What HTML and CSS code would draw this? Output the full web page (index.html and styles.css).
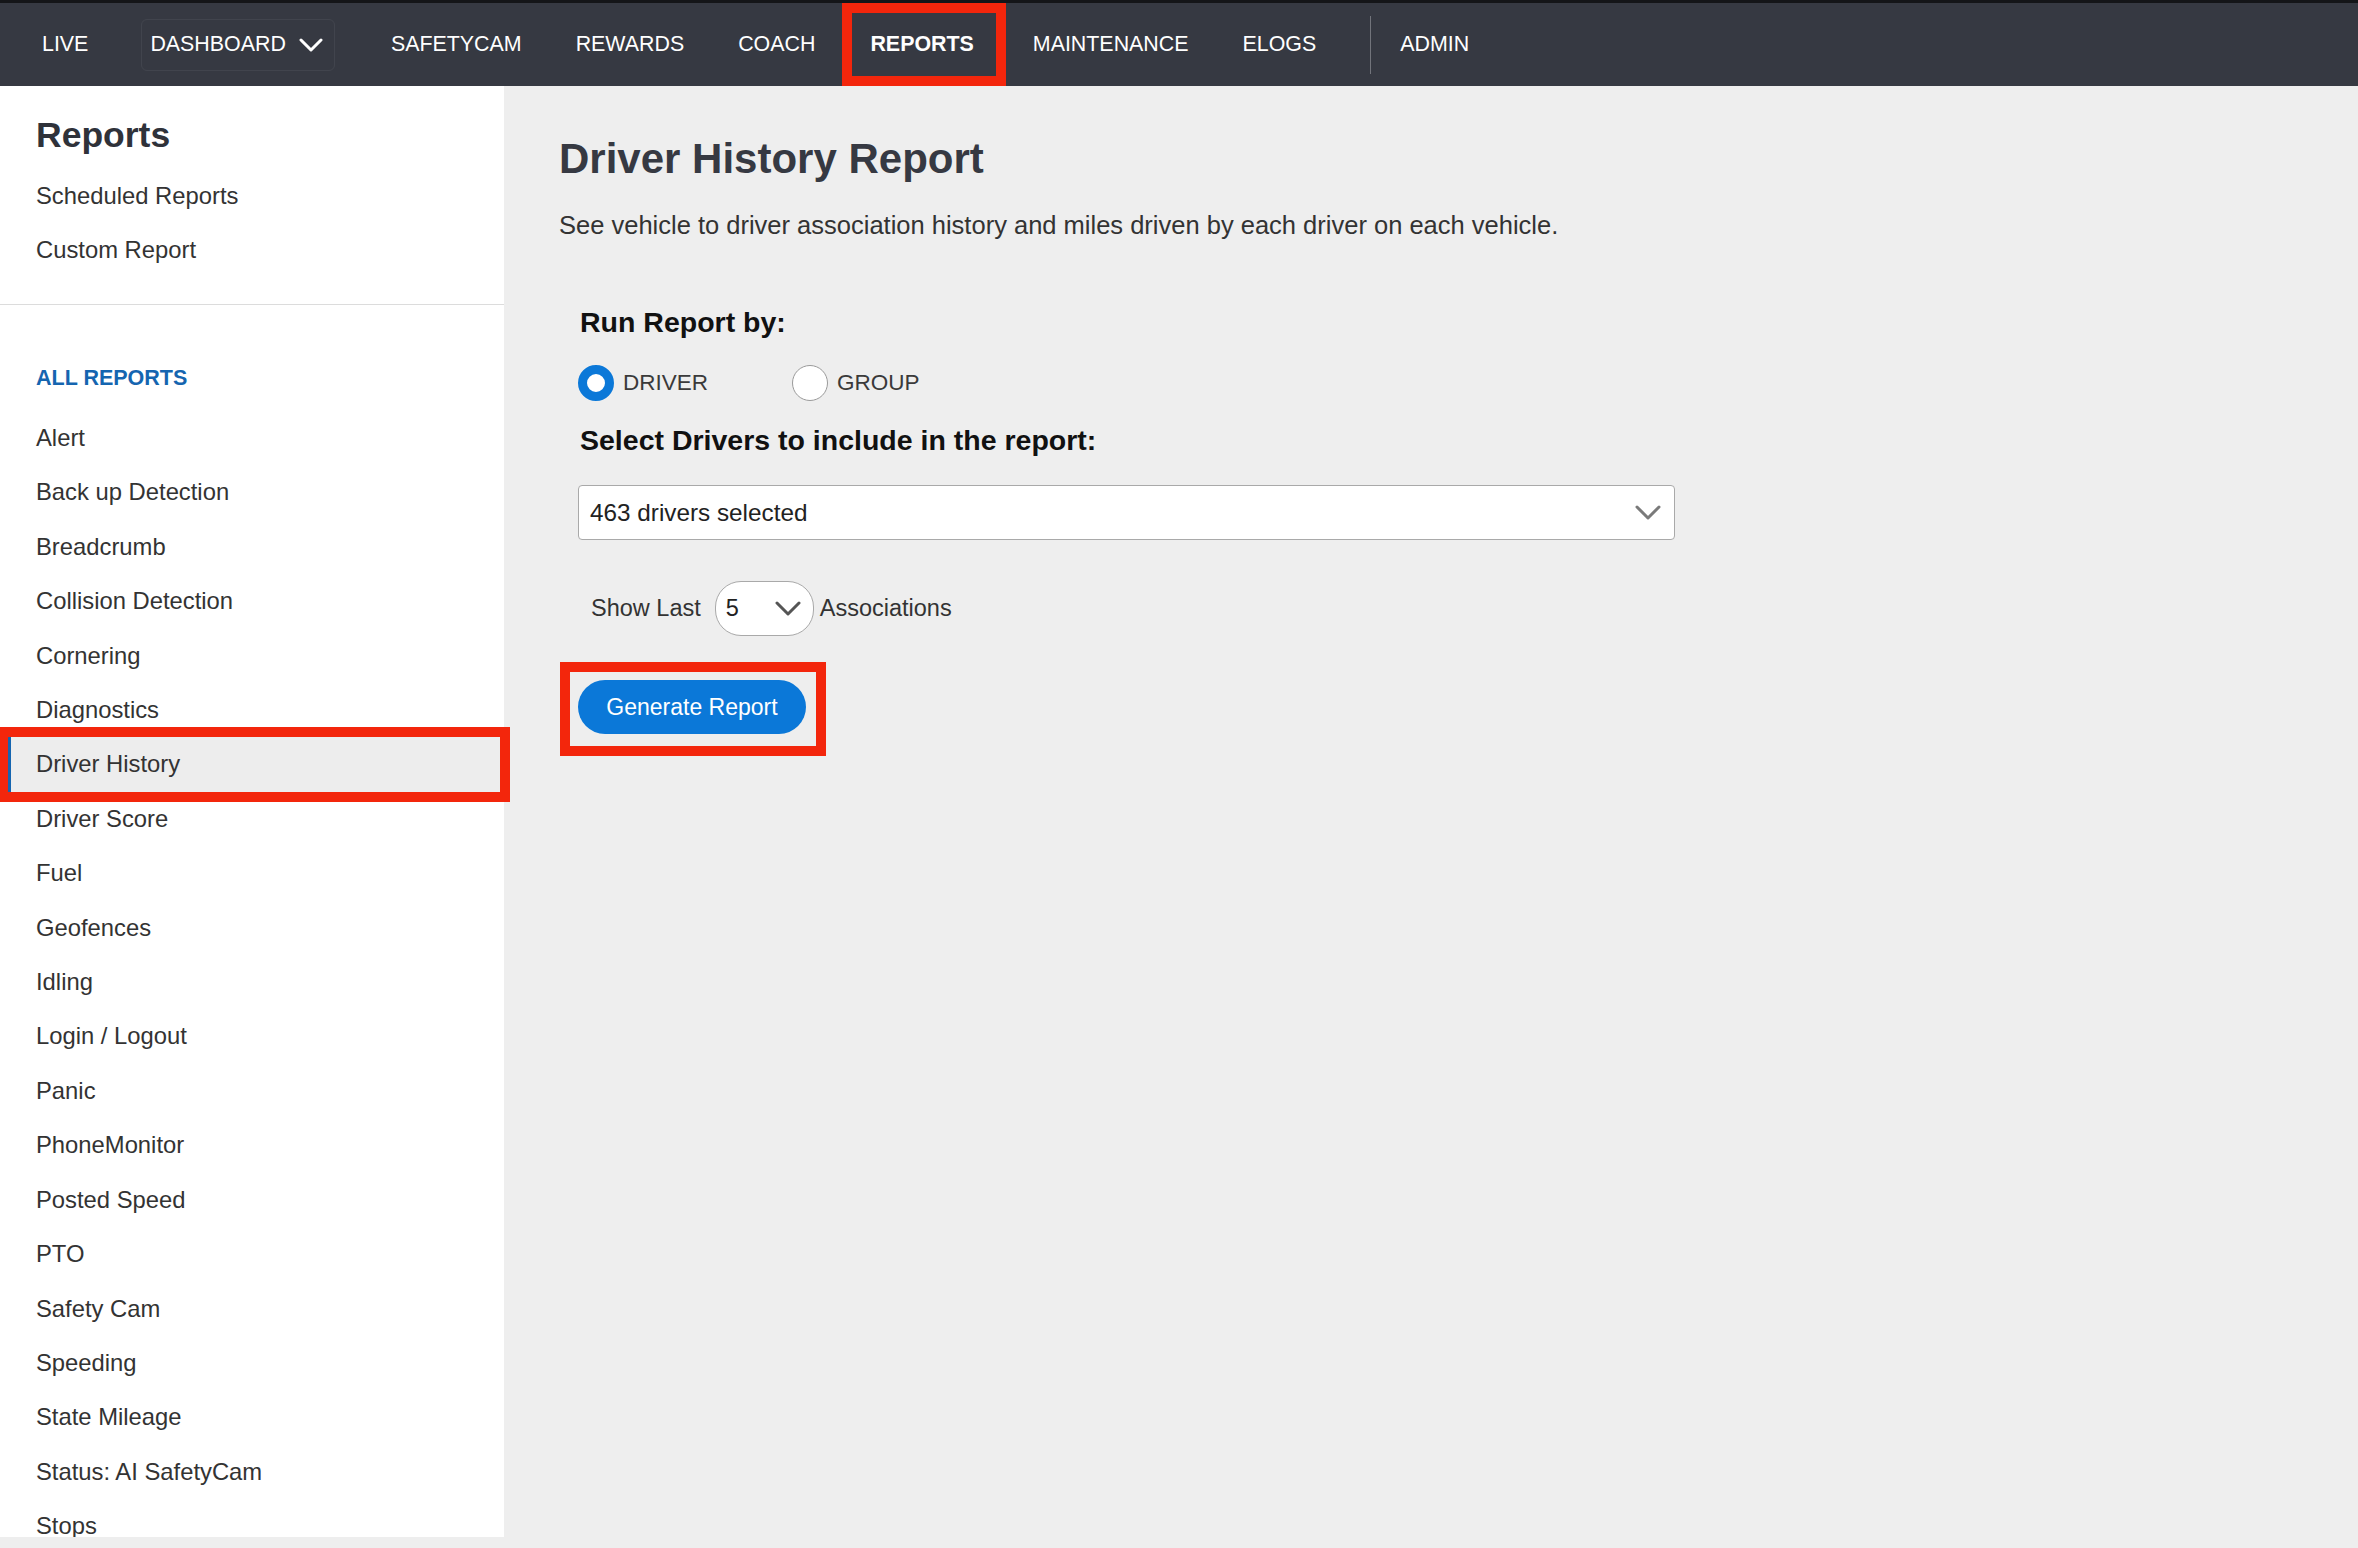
FILE: index.html
```html
<!DOCTYPE html>
<html lang="en">
<head>
    <meta charset="UTF-8">
    <meta name="viewport" content="width=device-width, initial-scale=1.0">
    <title>Driver History Report</title>
    <link rel="stylesheet" href="styles.css">
</head>
<body>
    <nav class="topbar">
        <a class="nav-link" href="#">LIVE</a>
        <a class="nav-link nav-dropdown" href="#">DASHBOARD
            <svg class="nav-caret" width="24" height="14" viewBox="0 0 24 14"><polyline points="2,2 12,12 22,2" fill="none" stroke="#fff" stroke-width="3" stroke-linecap="round" stroke-linejoin="round"/></svg>
        </a>
        <a class="nav-link" href="#">SAFETYCAM</a>
        <a class="nav-link" href="#">REWARDS</a>
        <a class="nav-link" href="#">COACH</a>
        <a class="nav-link nav-active" href="#">REPORTS</a>
        <a class="nav-link" href="#">MAINTENANCE</a>
        <a class="nav-link" href="#">ELOGS</a>
        <span class="nav-divider"></span>
        <a class="nav-link" href="#">ADMIN</a>
    </nav>

    <div class="page">
        <aside class="sidebar">
            <div class="sidebar-top">
                <h2 class="sidebar-title">Reports</h2>
                <a class="side-link" href="#">Scheduled Reports</a>
                <a class="side-link" href="#">Custom Report</a>
            </div>
            <h3 class="sidebar-heading">ALL REPORTS</h3>
            <ul class="report-list">
                <li>Alert</li>
                <li>Back up Detection</li>
                <li>Breadcrumb</li>
                <li>Collision Detection</li>
                <li>Cornering</li>
                <li>Diagnostics</li>
                <li class="selected">Driver History</li>
                <li>Driver Score</li>
                <li>Fuel</li>
                <li>Geofences</li>
                <li>Idling</li>
                <li>Login / Logout</li>
                <li>Panic</li>
                <li>PhoneMonitor</li>
                <li>Posted Speed</li>
                <li>PTO</li>
                <li>Safety Cam</li>
                <li>Speeding</li>
                <li>State Mileage</li>
                <li>Status: AI SafetyCam</li>
                <li>Stops</li>
            </ul>
        </aside>

        <main class="content">
            <h1 class="page-title">Driver History Report</h1>
            <p class="page-desc">See vehicle to driver association history and miles driven by each driver on each vehicle.</p>

            <div class="report-form">
                <h4 class="form-label">Run Report by:</h4>
                <div class="radio-row">
                    <label class="radio-option">
                        <span class="radio checked"></span>
                        <span class="radio-label">DRIVER</span>
                    </label>
                    <label class="radio-option">
                        <span class="radio"></span>
                        <span class="radio-label">GROUP</span>
                    </label>
                </div>

                <h4 class="form-label select-label">Select Drivers to include in the report:</h4>
                <div class="driver-select">
                    <span>463 drivers selected</span>
                    <svg width="26" height="16" viewBox="0 0 26 16"><polyline points="2,2 13,13 24,2" fill="none" stroke="#7a7a7a" stroke-width="3" stroke-linecap="round" stroke-linejoin="round"/></svg>
                </div>

                <div class="show-last">
                    <span>Show Last</span>
                    <div class="count-select">
                        <span>5</span>
                        <svg width="26" height="16" viewBox="0 0 26 16"><polyline points="2,2 13,13 24,2" fill="none" stroke="#555" stroke-width="3" stroke-linecap="round" stroke-linejoin="round"/></svg>
                    </div>
                    <span>Associations</span>
                </div>

                <div class="annotation">
                    <button class="btn-primary">Generate Report</button>
                </div>
            </div>
        </main>
    </div>
</body>
</html>
```

FILE: styles.css
```css
* {
    box-sizing: border-box;
}
body {
    margin: 0;
    background-color: #eeeeee;
    font-family: "Liberation Sans", Arial, sans-serif;
    color: #333;
}

/* top navigation */
.topbar {
    display: flex;
    align-items: center;
    height: 86px;
    padding-left: 15px;
    background-color: #363942;
    border-top: 3px solid #141518;
}
.nav-link {
    display: flex;
    align-items: center;
    height: 100%;
    padding: 0 27px;
    color: #fff;
    font-size: 21.4px;
    text-decoration: none;
}
.nav-dropdown {
    height: 52px;
    padding: 0 11px 0 8px;
    margin: 0 29px 0 26px;
    gap: 13px;
    border: 1px solid rgba(255, 255, 255, 0.06);
    border-radius: 6px;
}
.nav-active {
    padding: 0 32px 0 28px;
    font-weight: bold;
    box-shadow: inset 0 0 0 10px #f3260c;
}
.nav-divider {
    width: 1px;
    height: 58px;
    margin: 0 2px 0 27px;
    background-color: rgba(255, 255, 255, 0.3);
}

.page {
    display: flex;
}

/* sidebar */
.sidebar {
    flex-shrink: 0;
    width: 504px;
    height: 1451px;
    background: white;
    clip-path: inset(0 -20px 0 0);
}
.sidebar-top {
    padding: 27px 0;
    border-bottom: 1px solid #dcdcdc;
}
.sidebar-title {
    margin: 0 0 12px;
    padding-left: 36px;
    font-size: 35.5px;
    line-height: 44px;
    color: #2f323a;
}
.side-link {
    display: block;
    padding-left: 36px;
    line-height: 54px;
    font-size: 23.8px;
    color: #333;
    text-decoration: none;
}
.sidebar-heading {
    margin: 58px 0 18px;
    padding-left: 36px;
    font-size: 21.5px;
    line-height: 30px;
    color: #1565b0;
}
.report-list {
    list-style: none;
    margin: 0;
    padding: 0;
}
.report-list li {
    padding-left: 36px;
    line-height: 54.4px;
    font-size: 23.8px;
    color: #333;
}
.report-list li.selected {
    margin: 0 4px 0 8px;
    padding-left: 25px;
    background-color: #ededed;
    border-left: 3px solid #1565b0;
    outline: 10px solid #f3260c;
}

/* main content */
.content {
    flex: 1;
    padding: 48px 0 0 55px;
}
.page-title {
    margin: 0;
    font-size: 42px;
    line-height: 50px;
    color: #363942;
}
.page-desc {
    margin: 25px 0 0;
    font-size: 25.5px;
    line-height: 32px;
    color: #333;
}
.report-form {
    margin-top: 64px;
    padding-left: 19px;
}
.form-label {
    margin: 0;
    padding-left: 2px;
    font-size: 28.5px;
    line-height: 34px;
    color: #111;
}
.radio-row {
    display: flex;
    align-items: center;
    height: 40px;
    margin-top: 24px;
}
.radio-option {
    display: flex;
    align-items: center;
}
.radio-option + .radio-option {
    margin-left: 84px;
}
.radio {
    width: 36px;
    height: 36px;
    border-radius: 50%;
    border: 1px solid #9a9a9a;
    background: white;
}
.radio.checked {
    border: 9px solid #0b78d8;
}
.radio-label {
    margin-left: 9px;
    font-size: 22.5px;
    color: #3a3a3a;
}
.select-label {
    margin-top: 20px;
}
.driver-select {
    display: flex;
    align-items: center;
    justify-content: space-between;
    width: 1097px;
    height: 55px;
    margin-top: 28px;
    padding: 0 13px 0 11px;
    background: white;
    border: 1px solid #a9a9a9;
    border-radius: 4px;
    font-size: 24.3px;
    color: #222;
}
.show-last {
    display: flex;
    align-items: center;
    margin-top: 41px;
    padding-left: 13px;
    font-size: 23.5px;
    color: #333;
}
.count-select {
    display: flex;
    align-items: center;
    justify-content: space-between;
    width: 99px;
    height: 55px;
    margin: 0 6px 0 14px;
    padding: 0 12px 0 10px;
    background: white;
    border: 1px solid #a9a9a9;
    border-radius: 26px;
    color: #222;
}
.annotation {
    display: inline-block;
    margin: 26px 0 0 -18px;
    padding: 8px 10px 12px 8px;
    border: 10px solid #f3260c;
}
.btn-primary {
    display: block;
    width: 228px;
    height: 54px;
    border: none;
    border-radius: 27px;
    background-color: #0b78d8;
    color: white;
    font-family: inherit;
    font-size: 23px;
    cursor: pointer;
}
```
